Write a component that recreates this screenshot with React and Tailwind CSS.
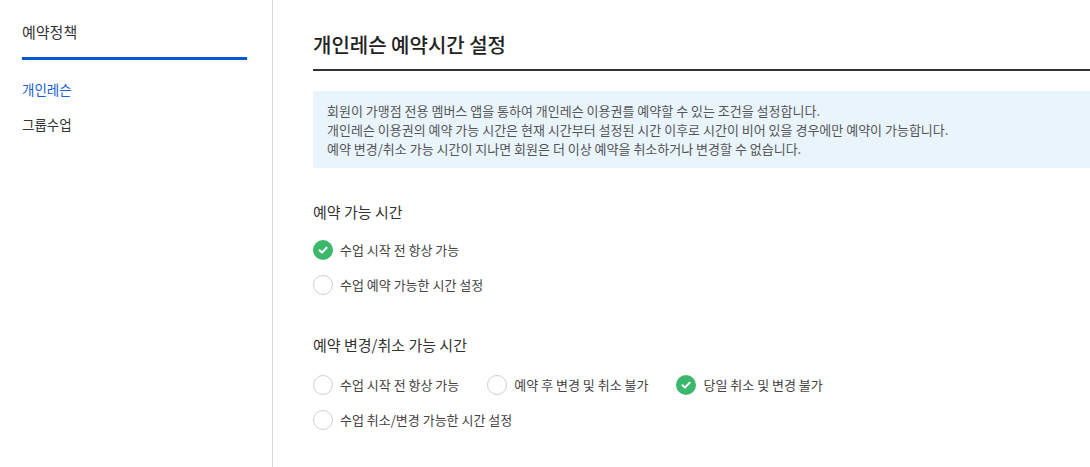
import React from 'react';

const Radio = ({ checked, label }) => (
  <label className="flex items-center gap-[7px] h-5 mr-[28px]">
    {checked ? (
      <span className="w-5 h-5 rounded-full bg-[#3cb86d] flex items-center justify-center">
        <svg width="12" height="12" viewBox="0 0 12 12" fill="none">
          <path d="M2.5 6.2 L5 8.6 L9.6 3.8" stroke="white" strokeWidth="2" strokeLinecap="round" strokeLinejoin="round" />
        </svg>
      </span>
    ) : (
      <span className="w-5 h-5 rounded-full border border-[#cfcfcf] bg-white" />
    )}
    <span className="text-[13px] leading-5 text-[#444]">{label}</span>
  </label>
);

const App = () => {
  return (
    <div className="flex w-[1090px] h-[467px] overflow-hidden bg-white font-['Noto_Sans_CJK_KR','Noto_Sans',sans-serif] text-[#333]">
      {/* Sidebar */}
      <aside className="w-[273px] shrink-0 border-r border-[#dcdcdc] pl-[22px] pr-[25px] pt-[22px]">
        <div className="text-[15px] leading-5 text-[#333] pb-[15px] border-b-[3px] border-[#0b57d0]">예약정책</div>
        <ul className="mt-[19px] flex flex-col gap-[15px] text-[13.5px] leading-5">
          <li className="text-[#1a5fd8]">개인레슨</li>
          <li className="text-[#333]">그룹수업</li>
        </ul>
      </aside>

      {/* Main */}
      <main className="flex-1 pl-10 pt-[31px]">
        <h1 className="text-[20px] leading-7 font-medium text-[#222] pb-[10px] border-b-2 border-[#333]">개인레슨 예약시간 설정</h1>

        <div className="mt-5 bg-[#e9f4fd] px-[14px] py-[10px] text-[13px] leading-[19px] text-[#555]">
          <p>회원이 가맹점 전용 멤버스 앱을 통하여 개인레슨 이용권를 예약할 수 있는 조건을 설정합니다.</p>
          <p>개인레슨 이용권의 예약 가능 시간은 현재 시간부터 설정된 시간 이후로 시간이 비어 있을 경우에만 예약이 가능합니다.</p>
          <p>예약 변경/취소 가능 시간이 지나면 회원은 더 이상 예약을 취소하거나 변경할 수 없습니다.</p>
        </div>

        <section className="mt-[34px]">
          <h2 className="text-[15px] leading-5 text-[#333]">예약 가능 시간</h2>
          <div className="mt-[18px] flex flex-col gap-[15px]">
            <Radio checked label="수업 시작 전 항상 가능" />
            <Radio label="수업 예약 가능한 시간 설정" />
          </div>
        </section>

        <section className="mt-10">
          <h2 className="text-[15px] leading-5 text-[#333]">예약 변경/취소 가능 시간</h2>
          <div className="mt-5 flex flex-col gap-[15px]">
            <div className="flex">
              <Radio label="수업 시작 전 항상 가능" />
              <Radio label="예약 후 변경 및 취소 불가" />
              <Radio checked label="당일 취소 및 변경 불가" />
            </div>
            <div className="flex">
              <Radio label="수업 취소/변경 가능한 시간 설정" />
            </div>
          </div>
        </section>
      </main>
    </div>
  );
};

export default App;
